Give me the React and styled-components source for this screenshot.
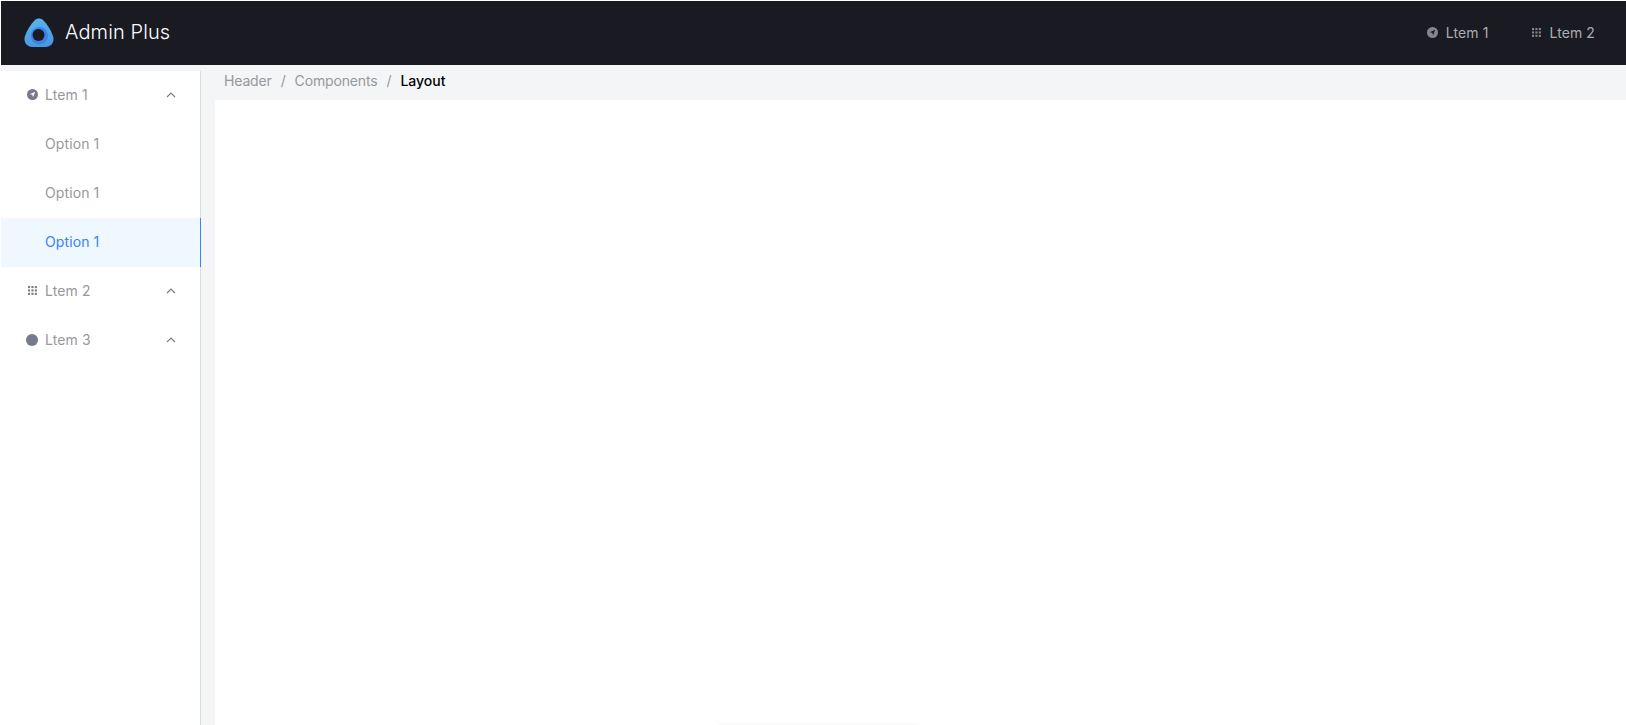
import { createGlobalStyle, styled } from "styled-components";

const GlobalStyle = createGlobalStyle`
  html, body {
    margin: 0;
    height: 100%;
    background: #fff;
  }
  body {
    padding: 1px 0 0 1px;
    box-sizing: border-box;
    overflow: hidden;
    font-family: Inter, "Noto Sans", "Liberation Sans", sans-serif;
  }
  #root {
    height: 100%;
  }
`;

const Page = styled.div`
  height: 100%;
  display: flex;
  flex-direction: column;
  background-color: #f4f5f7;
`;
const Header = styled.header`
  height: 64px;
  flex-shrink: 0;
  box-sizing: border-box;
  display: flex;
  align-items: center;
  justify-content: space-between;
  padding: 0 31px 2px 23px;
  background-color: #191a22;
`;
const Brand = styled.div`
  display: flex;
  align-items: center;
  gap: 11px;
`;
const LogoMark = styled.svg`
  margin-top: 2px;
`;
const Title = styled.span`
  font-size: 20px;
  font-weight: 300;
  letter-spacing: 0.1px;
  color: #fff;
`;
const TopNav = styled.nav`
  display: flex;
  gap: 44px;
`;
const TopItem = styled.div`
  display: flex;
  align-items: center;
  gap: 8px;
  font-size: 14px;
  letter-spacing: 0.1px;
  color: #acadb1;
`;
const Body = styled.div`
  flex: 1;
  min-height: 0;
  display: flex;
  padding-top: 6px;
`;
const Sidebar = styled.aside`
  width: 199px;
  flex-shrink: 0;
  background-color: #fff;
  border-right: 1px solid #dcdde1;
`;
const Row = styled.div`
  height: 49px;
  box-sizing: border-box;
  display: flex;
  align-items: center;
  font-size: 14px;
  letter-spacing: 0.1px;
  color: ${(p) => (p.$active ? "#3b82f6" : "#97989c")};
  background-color: ${(p) => (p.$active ? "#eff7ff" : "transparent")};
  box-shadow: ${(p) => (p.$active ? "1px 0 0 #3b82f6" : "none")};
  padding: ${(p) => (p.$option ? "0 0 2px 44px" : "0 24px 2px 25px")};
`;
const IconSlot = styled.span`
  width: 12px;
  margin-right: 7px;
  display: flex;
  justify-content: center;
`;
const Label = styled.span`
  flex: 1;
`;
const Main = styled.main`
  flex: 1;
  min-width: 0;
  display: flex;
  flex-direction: column;
`;
const Crumbs = styled.div`
  height: 29px;
  flex-shrink: 0;
  display: flex;
  align-items: center;
  padding: 0 0 10px 23px;
  box-sizing: border-box;
  font-size: 14px;
  letter-spacing: -0.15px;
  color: #97989c;
`;
const Slash = styled.span`
  margin: 0 9px;
`;
const Current = styled.span`
  color: #000;
  font-weight: 500;
  letter-spacing: 0;
`;
const Content = styled.div`
  flex: 1;
  margin-left: 14px;
  display: flex;
  flex-direction: column;
  align-items: flex-start;
  justify-content: flex-end;
  background-color: #fff;
`;
const FooterShade = styled.div`
  width: 199px;
  height: 2px;
  margin-left: 503px;
  background-color: #fbfbfb;
`;

const Logo = () => (
  <LogoMark width="30" height="30" viewBox="0 0 30 30">
    <defs>
      <linearGradient id="logoFill" x1="0.35" y1="0" x2="0.6" y2="1">
        <stop offset="0" stopColor="#5cb4e8" />
        <stop offset="1" stopColor="#4596e6" />
      </linearGradient>
    </defs>
    <path
      d="M11 2C13 0 17 0 19 2C23 6 27 12 29 18C31 24 27 29 22 29H8C3 29 -1 24 1 18C3 12 7 6 11 2Z"
      fill="url(#logoFill)"
    />
    <circle cx="15.3" cy="17.6" r="8.6" fill="#3f7fe6" />
    <circle cx="14.5" cy="17" r="6" fill="#191a22" />
  </LogoMark>
);

const CompassIcon = ({ color, bg = "#fff", size = 11 }) => (
  <svg width={size} height={size} viewBox="0 0 12 12">
    <circle cx="6" cy="6" r="6" fill={color} />
    <path d="M3 5.6L9 3 6.6 9 5.8 6.4z" fill={bg} />
  </svg>
);

const GridIcon = ({ color }) => (
  <svg width="9" height="9" viewBox="0 0 9 9" fill={color}>
    {[0, 3.4, 6.8].map((y) =>
      [0, 3.4, 6.8].map((x) => (
        <rect key={`${x}-${y}`} x={x} y={y} width="2.1" height="2.1" />
      )),
    )}
  </svg>
);

const DotIcon = () => (
  <svg width="12" height="12" viewBox="0 0 12 12">
    <circle cx="6" cy="6" r="6" fill="#767a8a" />
  </svg>
);

const Chevron = () => (
  <svg width="10" height="6" viewBox="0 0 10 6" fill="none">
    <path d="M1 5l4-4 4 4" stroke="#767a8a" strokeWidth="1.1" />
  </svg>
);

const App = () => {
  return (
    <Page>
      <GlobalStyle />
      <Header>
        <Brand>
          <Logo />
          <Title>Admin Plus</Title>
        </Brand>
        <TopNav>
          <TopItem>
            <CompassIcon color="#85868c" bg="#191a22" />
            Ltem 1
          </TopItem>
          <TopItem>
            <GridIcon color="#85868c" />
            Ltem 2
          </TopItem>
        </TopNav>
      </Header>
      <Body>
        <Sidebar>
          <Row>
            <IconSlot>
              <CompassIcon color="#767a8a" />
            </IconSlot>
            <Label>Ltem 1</Label>
            <Chevron />
          </Row>
          <Row $option>Option 1</Row>
          <Row $option>Option 1</Row>
          <Row $option $active>
            Option 1
          </Row>
          <Row>
            <IconSlot>
              <GridIcon color="#767a8a" />
            </IconSlot>
            <Label>Ltem 2</Label>
            <Chevron />
          </Row>
          <Row>
            <IconSlot>
              <DotIcon />
            </IconSlot>
            <Label>Ltem 3</Label>
            <Chevron />
          </Row>
        </Sidebar>
        <Main>
          <Crumbs>
            Header
            <Slash>/</Slash>
            Components
            <Slash>/</Slash>
            <Current>Layout</Current>
          </Crumbs>
          <Content>
            <FooterShade />
          </Content>
        </Main>
      </Body>
    </Page>
  );
};

export default App;
